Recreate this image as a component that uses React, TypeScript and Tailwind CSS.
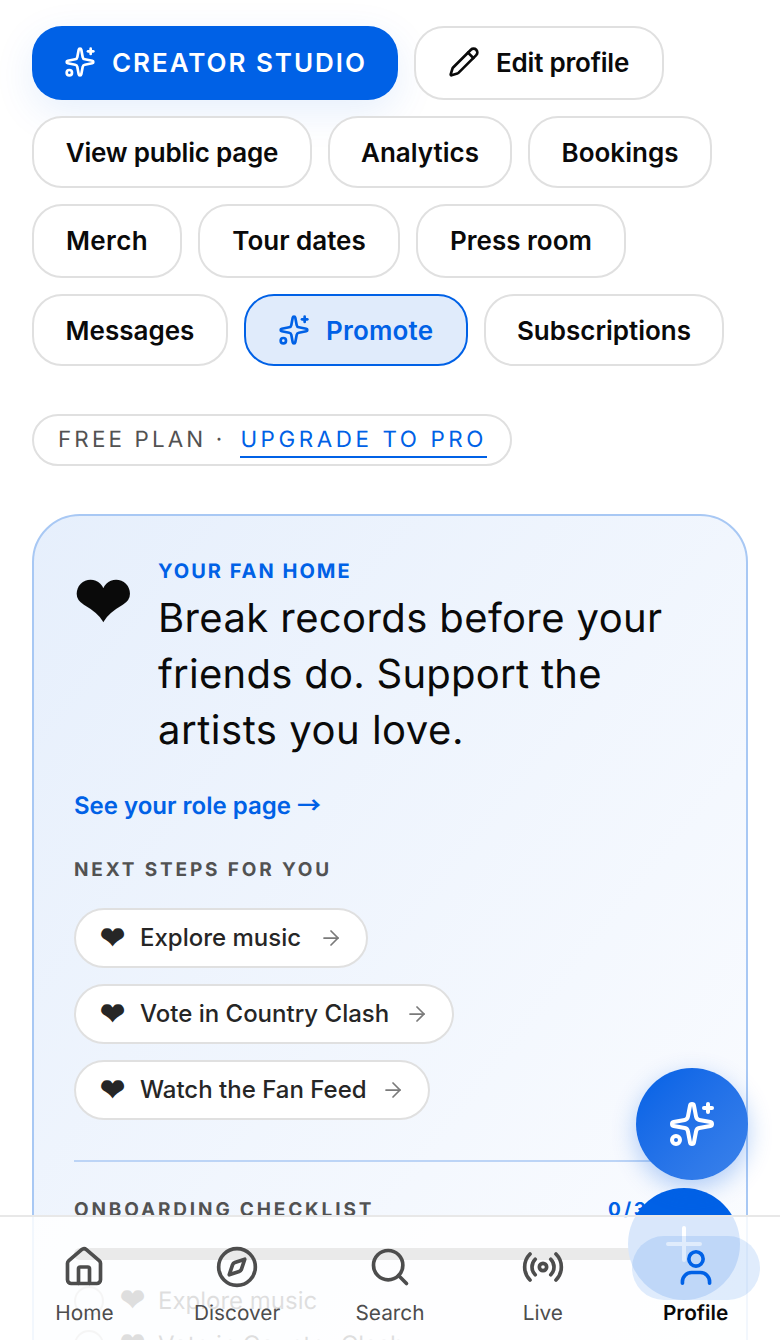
import { ArrowRight, Compass, House, Pencil, Radio, Search, Sparkles } from "lucide-react";

const font = { fontFamily: "Inter, sans-serif" };
const symbolFont = { fontFamily: "'Liberation Sans', sans-serif" };

type ChipProps = {
  label: string;
  className: string;
};

function Chip({ label, className }: ChipProps) {
  return (
    <button
      className={`flex items-center justify-center rounded-[30px] border-2 border-[#e0e0e0] bg-white text-[26px] font-semibold text-[#0a0a0a] ${className}`}
      type="button"
    >
      {label}
    </button>
  );
}

function StepLink({ label, className }: { label: string; className: string }) {
  return (
    <button
      className={`flex h-[60px] items-center rounded-full border-2 border-[#e0e0e0] bg-white pl-[22px] pr-[23px] text-[24px] font-medium text-[#262626] ${className}`}
      type="button"
    >
      <span className="mr-[14px] w-[28px] text-center text-[30px] font-bold leading-none" style={symbolFont}>
        ❤
      </span>
      {label}
      <ArrowRight className="ml-auto h-[24px] w-[24px] text-[#7a7a7a]" strokeWidth={1.75} />
    </button>
  );
}

function NavItem({ label, icon, active }: { label: string; icon: React.ReactNode; active?: boolean }) {
  return (
    <div className="relative flex flex-col items-center">
      {active && <div className="absolute top-[19px] h-[64px] w-[128px] rounded-full bg-[#0061e6]/12" />}
      <div className={active ? "relative mt-[28px] text-[#0061e6]" : "relative mt-[28px] text-[#4d4d4d]"}>{icon}</div>
      <span className={active ? "relative mt-[13px] text-[20.8px] font-semibold leading-[24px] text-[#0a0a0a]" : "relative mt-[13px] text-[20.8px] leading-[24px] text-[#4d4d4d]"}>
        {label}
      </span>
    </div>
  );
}

export default function App() {
  return (
    <div className="relative h-[1340px] w-[780px] overflow-hidden bg-white [text-rendering:geometricPrecision]" style={font}>
      <div className="flex flex-col gap-4 px-8 pt-[26px]">
        <div className="flex gap-4">
          <button
            className="flex h-[74px] w-[366px] items-center rounded-[30px] bg-[#0061e6] pb-[2px] pl-[32px] text-[26px] font-semibold tracking-[0.075em] text-white shadow-[0_12px_40px_rgba(0,97,230,0.1)]"
            type="button"
          >
            <Sparkles className="mr-[16px] h-[32px] w-[32px]" strokeWidth={2} />
            CREATOR STUDIO
          </button>
          <button
            className="flex h-[74px] w-[250px] items-center rounded-[30px] border-2 border-[#e0e0e0] bg-white pb-[2px] pl-[32px] text-[26px] font-semibold tracking-[-0.2px] text-[#0a0a0a]"
            type="button"
          >
            <Pencil className="mr-[16px] h-[32px] w-[32px]" strokeWidth={2} />
            Edit profile
          </button>
        </div>
        <div className="flex gap-4">
          <Chip label="View public page" className="h-[72px] w-[280px] tracking-[-0.2px]" />
          <Chip label="Analytics" className="h-[72px] w-[184px]" />
          <Chip label="Bookings" className="h-[72px] w-[184px]" />
        </div>
        <div className="flex gap-4">
          <Chip label="Merch" className="h-[74px] w-[150px] pb-[2px] tracking-[0.4px]" />
          <Chip label="Tour dates" className="h-[74px] w-[202px] pb-[2px]" />
          <Chip label="Press room" className="h-[74px] w-[210px] pb-[2px]" />
        </div>
        <div className="flex gap-4">
          <Chip label="Messages" className="h-[72px] w-[196px]" />
          <button
            className="flex h-[72px] w-[224px] items-center rounded-[30px] border-2 border-[#0061e6] bg-[#e0ebfb] pl-[32px] text-[26px] font-semibold tracking-[0.2px] text-[#0061e6]"
            type="button"
          >
            <Sparkles className="mr-[16px] h-[32px] w-[32px]" strokeWidth={2} />
            Promote
          </button>
          <Chip label="Subscriptions" className="h-[72px] w-[240px]" />
        </div>
      </div>

      <div className="mx-8 mt-[48px] flex h-[52px] w-[480px] items-center whitespace-nowrap rounded-full border-2 border-[#e0e0e0] px-[24px] text-[22.4px] tracking-[0.16em] text-[#525252]">
        <span className="tracking-[0.14em]">FREE PLAN ·</span>
        <span className="ml-[15px] mt-[2px] border-b-2 border-[#0061e6] leading-[32px] text-[#0061e6]">UPGRADE TO PRO</span>
      </div>

      <div className="mx-8 mt-[48px] h-[900px] rounded-[48px] border-2 border-[#a8c8f4] bg-gradient-to-br from-[#e6effc] to-[#fcfdff] px-[40px] pt-[41px]">
        <div className="flex">
          <div className="w-[84px] pt-[10px] text-[70px] font-bold leading-none text-[#0a0a0a]" style={symbolFont}>
            ❤
          </div>
          <div>
            <div className="text-[20px] font-bold leading-[28px] tracking-[0.1em] text-[#0061e6]">YOUR FAN HOME</div>
            <div className="mt-[5px] text-[40px] leading-[56px] tracking-[0.01em] text-[#0a0a0a]">
              <span className="block">Break records before your</span>
              <span className="block tracking-[0.27px]">friends do. Support the</span>
              <span className="block tracking-[0.52px]">artists you love.</span>
            </div>
          </div>
        </div>
        <div className="mt-[30px] h-[32px] text-[24px] font-semibold leading-[32px] text-[#0061e6]">
          See your role page <span style={{ fontFamily: "'Noto Sans CJK SC', sans-serif" }}>→</span>
        </div>
        <div className="mt-[36px] text-[19px] font-bold leading-[28px] tracking-[0.15em] text-[#525252]">NEXT STEPS FOR YOU</div>
        <div className="mt-[24px] flex flex-col gap-4">
          <StepLink label="Explore music" className="w-[294px]" />
          <StepLink label="Vote in Country Clash" className="w-[380px]" />
          <StepLink label="Watch the Fan Feed" className="w-[356px]" />
        </div>
        <div className="mt-[40px] border-t-2 border-[#bcd4f6] pt-[34px]">
          <div className="flex justify-between text-[19px] font-bold leading-[28px] tracking-[0.15em]">
            <span className="text-[#525252]">ONBOARDING CHECKLIST</span>
            <span className="pr-[57px] text-[#0061e6]">0/3</span>
          </div>
          <div className="mt-[24px] h-[12px] rounded-full bg-[#707070]" />
          <div className="mt-[25px] flex flex-col gap-[12px]">
            {["Explore music", "Vote in Country Clash"].map((item) => (
              <div className="flex h-[32px] items-center text-[24px] text-[#262626]" key={item}>
                <span className="h-[30px] w-[30px] rounded-full border-2 border-[#bdbdbd]" />
                <span className="ml-[16px] w-[38px] text-[30px] font-bold leading-none" style={symbolFont}>
                  ❤
                </span>
                {item}
              </div>
            ))}
          </div>
        </div>
      </div>

      <div className="absolute left-[628px] top-[1188px] flex h-[112px] w-[112px] items-center justify-center rounded-full bg-[#0061e6] text-white">
        <svg className="h-[48px] w-[48px]" fill="none" stroke="currentColor" strokeLinecap="round" strokeWidth="2" viewBox="0 0 24 24">
          <path d="M12 4v16M4 12h16" />
        </svg>
      </div>

      <div className="absolute inset-x-0 bottom-0 grid h-[125px] grid-cols-5 border-t-2 border-[#e8e8e8] bg-white/85 px-2">
        <NavItem label="Home" icon={<House className="h-[44px] w-[44px]" strokeWidth={2} />} />
        <NavItem label="Discover" icon={<Compass className="h-[44px] w-[44px]" strokeWidth={2} />} />
        <NavItem label="Search" icon={<Search className="h-[44px] w-[44px]" strokeWidth={2} />} />
        <NavItem label="Live" icon={<Radio className="h-[44px] w-[44px]" strokeWidth={2} />} />
        <NavItem
          label="Profile"
          active
          icon={
            <svg className="h-[44px] w-[44px]" fill="none" stroke="currentColor" strokeLinecap="round" strokeWidth="2" viewBox="0 0 24 24">
              <circle cx="12" cy="7.6" r="3.9" />
              <path d="M4.6 20.8v-.8a5 5 0 0 1 5-5h4.8a5 5 0 0 1 5 5v.8" />
            </svg>
          }
        />
      </div>

      <div className="absolute left-[636px] top-[1068px] flex h-[112px] w-[112px] items-center justify-center rounded-full bg-gradient-to-br from-[#0061e6] to-[#3b82ea] text-white shadow-[0_8px_24px_rgba(0,97,230,0.3)]">
        <Sparkles className="h-[48px] w-[48px]" strokeWidth={2} />
      </div>
    </div>
  );
}
